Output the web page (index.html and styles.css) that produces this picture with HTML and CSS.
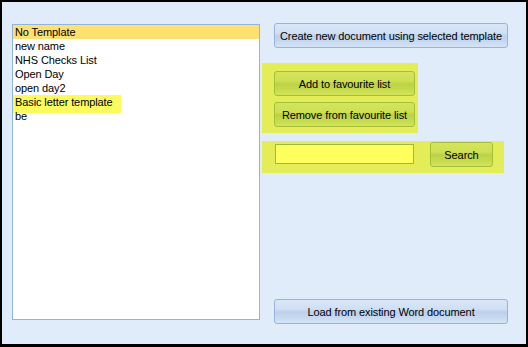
FILE: index.html
```html
<!DOCTYPE html>
<html>
<head>
<meta charset="utf-8">
<link rel="stylesheet" href="styles.css">
</head>
<body>
<div class="window">
  <div class="list">
    <div class="item selected">No Template</div>
    <div class="item">new name</div>
    <div class="item">NHS Checks List</div>
    <div class="item">Open Day</div>
    <div class="item">open day2</div>
    <div class="item marked"><span class="mark">Basic letter template</span></div>
    <div class="item">be</div>
  </div>
  <div class="side">
    <button class="btn blue wide create">Create new document using selected template</button>
    <div class="hl fav">
      <button class="btn green favbtn">Add to favourite list</button>
      <button class="btn green favbtn">Remove from favourite list</button>
    </div>
    <div class="hl searchbox">
      <input class="field" type="text">
      <button class="btn green searchbtn">Search</button>
    </div>
    <button class="btn blue wide load">Load from existing Word document</button>
  </div>
</div>
</body>
</html>
```
FILE: styles.css
```css
* { box-sizing: border-box; }
html, body { margin: 0; padding: 0; background: #000; }
body {
  font-family: "Liberation Sans", Arial, sans-serif;
  font-size: 11px;
  letter-spacing: -0.1px;
  color: #000;
}
.window {
  width: 528px;
  height: 347px;
  border-style: solid;
  border-color: #000;
  border-width: 2px 2px 3px 2px;
  background: #e1ecfa;
  padding: 22px 0 0 10px;
  display: flex;
  align-items: flex-start;
}
.list {
  width: 248px;
  height: 296px;
  border: 1px solid #93b3df;
  background: #fff;
}
.item {
  height: 14px;
  line-height: 14px;
  padding-left: 2px;
  white-space: nowrap;
}
.item.selected { background: #ffe070; }
.item.marked { padding-left: 0; }
.mark {
  display: block;
  width: 108px;
  height: 18px;
  line-height: 14px;
  padding-left: 2px;
  background: #fbfb5e;
}
.side {
  margin-left: 2px;
  margin-top: -1px;
  display: flex;
  flex-direction: column;
  align-items: flex-start;
}
.btn {
  font-family: inherit;
  font-size: 11px;
  letter-spacing: -0.1px;
  color: #000;
  height: 25px;
  padding: 0;
  border-radius: 3px;
  cursor: default;
  white-space: nowrap;
}
.blue {
  border: 1px solid #97b2dc;
  background: linear-gradient(#d9e7f8 0%, #cfdff4 40%, #bdd1ec 52%, #c6d8f0 75%, #d5e3f6 100%);
}
.green {
  border: 1px solid #a4bf3a;
  background: linear-gradient(#d6e55c 0%, #cddf52 40%, #bcd245 52%, #c6da4e 75%, #d3e35a 100%);
}
.wide { width: 234px; margin-left: 12px; }
.hl { background: #e3ed57; }
.fav {
  margin-top: 15px;
  width: 156px;
  height: 70px;
  padding: 8px 0 0 12px;
  display: flex;
  flex-direction: column;
  gap: 6px;
}
.favbtn { width: 141px; }
.searchbox {
  margin-top: 8px;
  width: 242px;
  height: 32px;
  display: flex;
  align-items: flex-start;
}
.field {
  margin: 3px 0 0 13px;
  width: 139px;
  height: 20px;
  border: 1px solid #9dba3c;
  background: #ffff5e;
  padding: 0;
  outline: none;
}
.searchbtn {
  margin: 1px 0 0 16px;
  width: 63px;
}
.load { margin-top: 126px; }
```
